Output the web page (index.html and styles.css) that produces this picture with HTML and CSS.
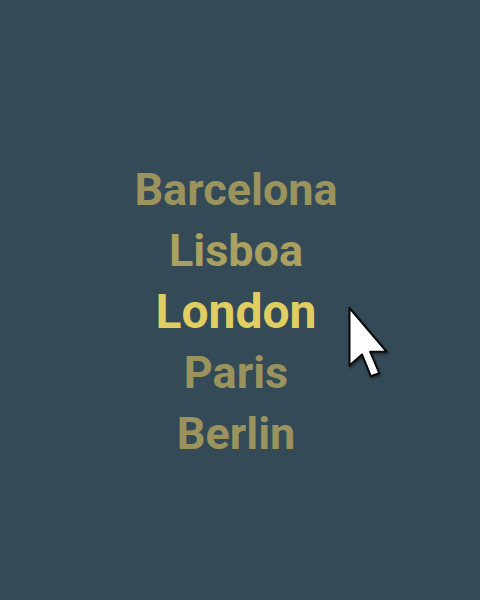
FILE: index.html
```html
<!DOCTYPE html>
<html lang="en">
<head>
    <meta charset="UTF-8">
    <meta name="viewport" content="width=device-width, initial-scale=1">
    <title>Cities</title>
    <link rel="stylesheet" href="styles.css">
</head>
<body>
    <ul class="cities">
        <li>Barcelona</li>
        <li class="near">Lisboa</li>
        <li class="active">London</li>
        <li>Paris</li>
        <li>Berlin</li>
    </ul>
    <svg class="cursor" viewBox="0 0 46 78" aria-hidden="true">
        <path d="M4.5 4 L4.5 61.5 L17 50.5 L25.8 72.2 L34.3 69.2 L25.2 47.8 L41.5 47.5 Z"/>
    </svg>
</body>
</html>
```

FILE: styles.css
```css
body {
    margin: 0;
    min-height: 100vh;
    display: flex;
    align-items: center;
    justify-content: center;
    background: #344b57;
    font-family: Roboto, Arial, sans-serif;
}
.cities {
    margin: 0;
    padding: 22px 8px 0 0;
    list-style: none;
    text-align: center;
    font-size: 45px;
    font-weight: 700;
    line-height: 61px;
    color: #9a935e;
}
.cities .near { color: #aaa05f; }
.cities .active {
    font-size: 48px;
    color: #e1ce63;
}
.cursor {
    position: absolute;
    left: calc(50% + 105px);
    top: calc(50% + 4px);
    width: 46px;
    height: 78px;
    fill: #fff;
    stroke: #080a0b;
    stroke-width: 2;
    stroke-linejoin: round;
    filter: drop-shadow(1px 2px 1px rgba(0, 0, 0, 0.4));
}
```
